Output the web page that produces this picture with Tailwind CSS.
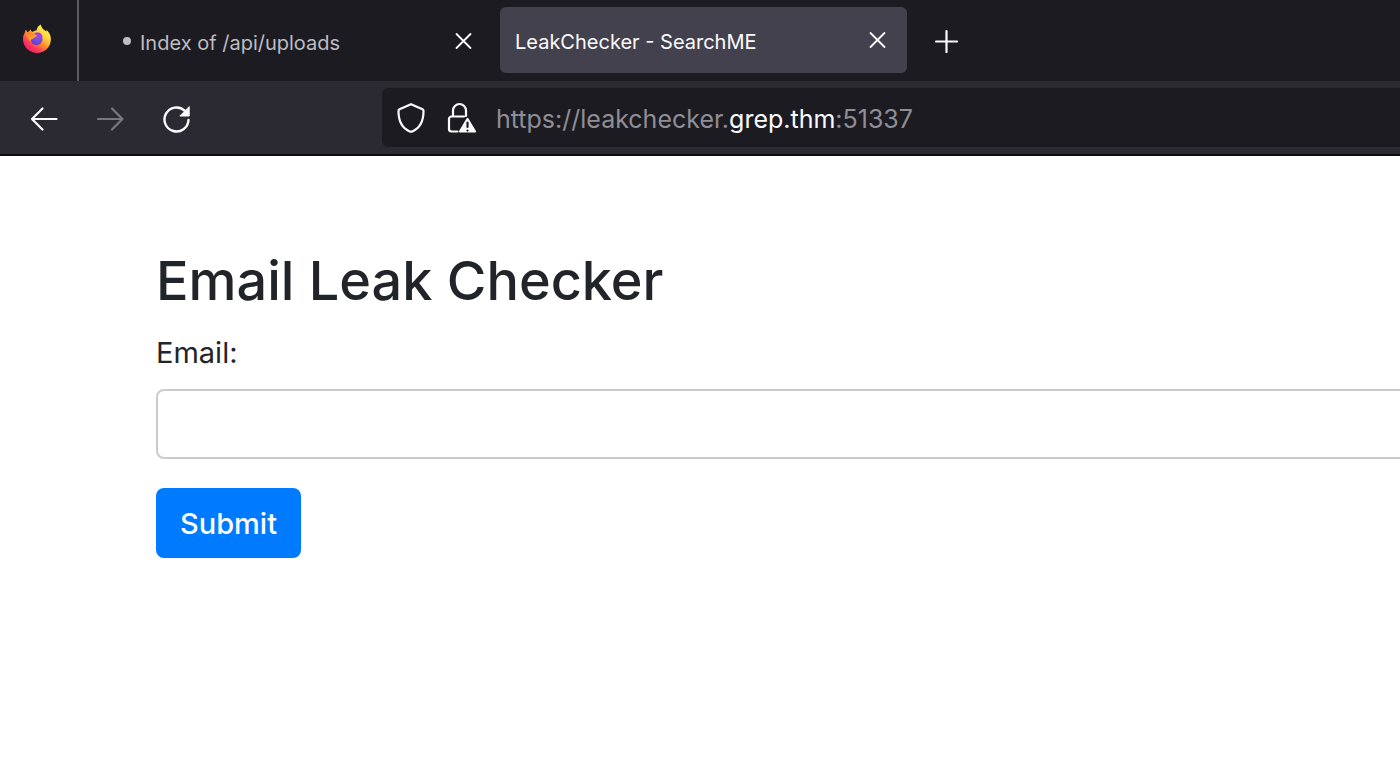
<!DOCTYPE html>
<html lang="en">
<head>
<meta charset="utf-8">
<meta name="viewport" content="width=device-width, initial-scale=1">
<title>LeakChecker - SearchME</title>
<script src="https://cdn.jsdelivr.net/npm/@tailwindcss/browser@4"></script>
</head>
<body class="min-h-screen overflow-x-hidden bg-white font-['Inter','Liberation_Sans',sans-serif] text-[#212529]">
<header class="border-b-2 border-[#0c0c0d] bg-[#2b2a33] text-[#fbfbfe]">
  <div class="flex h-[81px] bg-[#1c1b22]" role="tablist">
    <button type="button" aria-label="Firefox View" class="flex w-[79px] shrink-0 items-center justify-center border-r-2 border-[#5b5a62] pr-1 pb-1">
      <svg class="size-[30px]" viewBox="0 0 30 30" aria-hidden="true">
        <defs>
          <linearGradient id="flame" x1="0.85" y1="0.1" x2="0.2" y2="0.95">
            <stop offset="0" stop-color="#fff44f"/><stop offset=".3" stop-color="#ffd040"/><stop offset=".52" stop-color="#ff9128"/><stop offset=".75" stop-color="#ff4055"/><stop offset="1" stop-color="#f5156c"/>
          </linearGradient>
          <radialGradient id="globe" cx=".6" cy=".2" r=".85">
            <stop offset="0" stop-color="#a04be1"/><stop offset=".5" stop-color="#7a4be8"/><stop offset="1" stop-color="#5b3bc0"/>
          </radialGradient>
          <linearGradient id="fox" x1="0" y1="0" x2="1" y2="1">
            <stop offset="0" stop-color="#ff7a2c"/><stop offset="1" stop-color="#ffb32b"/>
          </linearGradient>
        </defs>
        <path d="M4 5.500C4.300 7 5 8 6 8.300L8.800 5.500C9 7 9.500 7.500 10.500 8C12 7 13 6.500 14.500 6.500C15 3.500 16.500 1.500 18.800.5C19 3.500 21.500 5.500 24.200 7.500C24.500 7 24.500 6.500 24.400 5.800C27.500 8.500 29 12 28.900 15.500C28.600 23.300 22.500 29 15 29C7.200 29 1 22.800 1 15.300C1 12 1.700 10.500 2.800 8.700C2.800 7.500 3.200 6.500 4 5.500Z" fill="url(#flame)"/>
        <circle cx="14.500" cy="15" r="6" fill="url(#globe)"/>
        <path d="M4 9C7 7 10 7.500 11.500 9.800L15 11.500C15 13 12.200 13.300 11.700 14C11.200 15 8.500 15 8.600 17.500C6 15.500 4 13 4 9Z" fill="url(#fox)"/>
        <path d="M13 9C16.500 7.500 20.500 9.500 20.500 13L18.300 11C17 10 15 9.800 13 9Z" fill="#a336df"/>
      </svg>
    </button>
    <div class="flex w-[421px] shrink-0 items-center pr-[27px] pl-11">
      <button type="button" role="tab" aria-selected="false" class="flex flex-1 items-center gap-[9px] text-left text-xl text-[#bdbdc3]">
        <span class="size-2 rounded-full bg-[#bdbdc3]"></span>
        <span class="pt-1">Index of /api/uploads</span>
      </button>
      <button type="button" aria-label="Close Index of /api/uploads">
        <svg class="size-5" viewBox="0 0 20 20" fill="none" stroke="currentColor" stroke-width="1.800" stroke-linecap="round"><path d="M3.500 3L17.500 17M17.500 3L3.500 17"/></svg>
      </button>
    </div>
    <div class="mt-[7px] mb-2 flex w-[407px] shrink-0 items-center rounded-md bg-[#42414d] pr-5 pl-[15px]">
      <button type="button" role="tab" aria-selected="true" class="flex-1 pt-1 text-left text-xl">LeakChecker - SearchME</button>
      <button type="button" aria-label="Close LeakChecker - SearchME">
        <svg class="size-5" viewBox="0 0 20 20" fill="none" stroke="currentColor" stroke-width="1.800" stroke-linecap="round"><path d="M3.500 3L17.500 17M17.500 3L3.500 17"/></svg>
      </button>
    </div>
    <button type="button" aria-label="New tab" class="px-7">
      <svg class="size-6" viewBox="0 0 24 24" fill="none" stroke="currentColor" stroke-width="2.200" stroke-linecap="round"><path d="M11.500 2V23M1 12.500H22"/></svg>
    </button>
  </div>
  <nav class="flex h-[73px] items-center pl-[29px]" aria-label="Navigation">
    <div class="flex w-[353px] shrink-0 items-center gap-9">
      <button type="button" aria-label="Back">
        <svg class="size-[30px]" viewBox="0 0 30 30" fill="none" stroke="currentColor" stroke-width="2.200" stroke-linecap="round" stroke-linejoin="round"><path d="M13.500 5.500L3 16L13.500 26.500M3 16H27.500"/></svg>
      </button>
      <button type="button" aria-label="Forward" disabled class="text-[#78777f]">
        <svg class="size-[30px]" viewBox="0 0 30 30" fill="none" stroke="currentColor" stroke-width="2.200" stroke-linecap="round" stroke-linejoin="round"><path d="M17 5.500L27.500 16L17 26.500M27.500 16H3"/></svg>
      </button>
      <button type="button" aria-label="Reload">
        <svg class="size-[30px]" viewBox="0 0 30 30" fill="none" stroke="currentColor" stroke-width="2.400" stroke-linecap="round"><path d="M27.500 17A12 12 0 1 1 23.500 7.500"/><path d="M28.200 4V13H19.200Z" fill="currentColor" stroke-width="1" stroke-linejoin="round"/></svg>
      </button>
    </div>
    <div class="flex h-[59px] min-w-0 flex-1 items-center rounded-l-md bg-[#1c1b22] pl-[14px]">
      <button type="button" aria-label="Tracking protection" class="shrink-0">
        <svg class="h-8 w-[30px]" viewBox="0 0 30 32" fill="none" stroke="currentColor" stroke-width="2.200" stroke-linejoin="round"><path d="M15 2.200L26.500 7.300Q27.500 7.800 27.500 9C27.500 17 25.500 25.500 16.300 29.400Q15 30 13.700 29.400C4.500 25.500 2.500 17 2.500 9Q2.500 7.800 3.500 7.300Z"/></svg>
      </button>
      <button type="button" aria-label="Connection is not secure" class="ml-[21px] shrink-0">
        <svg class="h-8 w-[30px]" viewBox="0 0 30 32" fill="none" stroke="currentColor" stroke-width="2.200" stroke-linecap="round" stroke-linejoin="round"><path d="M6 14V8.500a6.500 6.500 0 0 1 13 0V14M10.500 29.500H4.500a2.500 2.500 0 0 1-2.500-2.500V17a2.500 2.500 0 0 1 2.500-2.500H17"/><path d="M20.500 17L28 29.500H13Z" fill="currentColor"/><path d="M20.500 20.500V25M20.500 28.500V28.600" stroke="#1c1b22"/></svg>
      </button>
      <div role="textbox" tabindex="0" aria-label="Address" class="ml-[19px] truncate pt-[2px] text-[25px] leading-8 text-[#8f8e95]">https://leakchecker.<span class="text-[#fbfbfe]">grep.thm</span>:51337</div>
    </div>
  </nav>
</header>
<main class="pt-[90px] pl-[156px]">
  <h1 class="text-[54px] leading-[70px] font-medium">Email Leak Checker</h1>
  <form onsubmit="return false">
    <label for="email" class="mt-4 block text-[29px] leading-[42px]">Email:</label>
    <input id="email" type="email" class="mt-[15px] -mr-8 block h-[70px] w-[calc(100%+32px)] rounded-lg border-2 border-[#c9cbcd] bg-white px-6 text-[29px] outline-none">
    <button type="submit" class="mt-[29px] h-[70px] rounded-lg bg-[#007bff] px-6 pt-[2px] text-[29px] font-medium text-white">Submit</button>
  </form>
</main>
</body>
</html>
